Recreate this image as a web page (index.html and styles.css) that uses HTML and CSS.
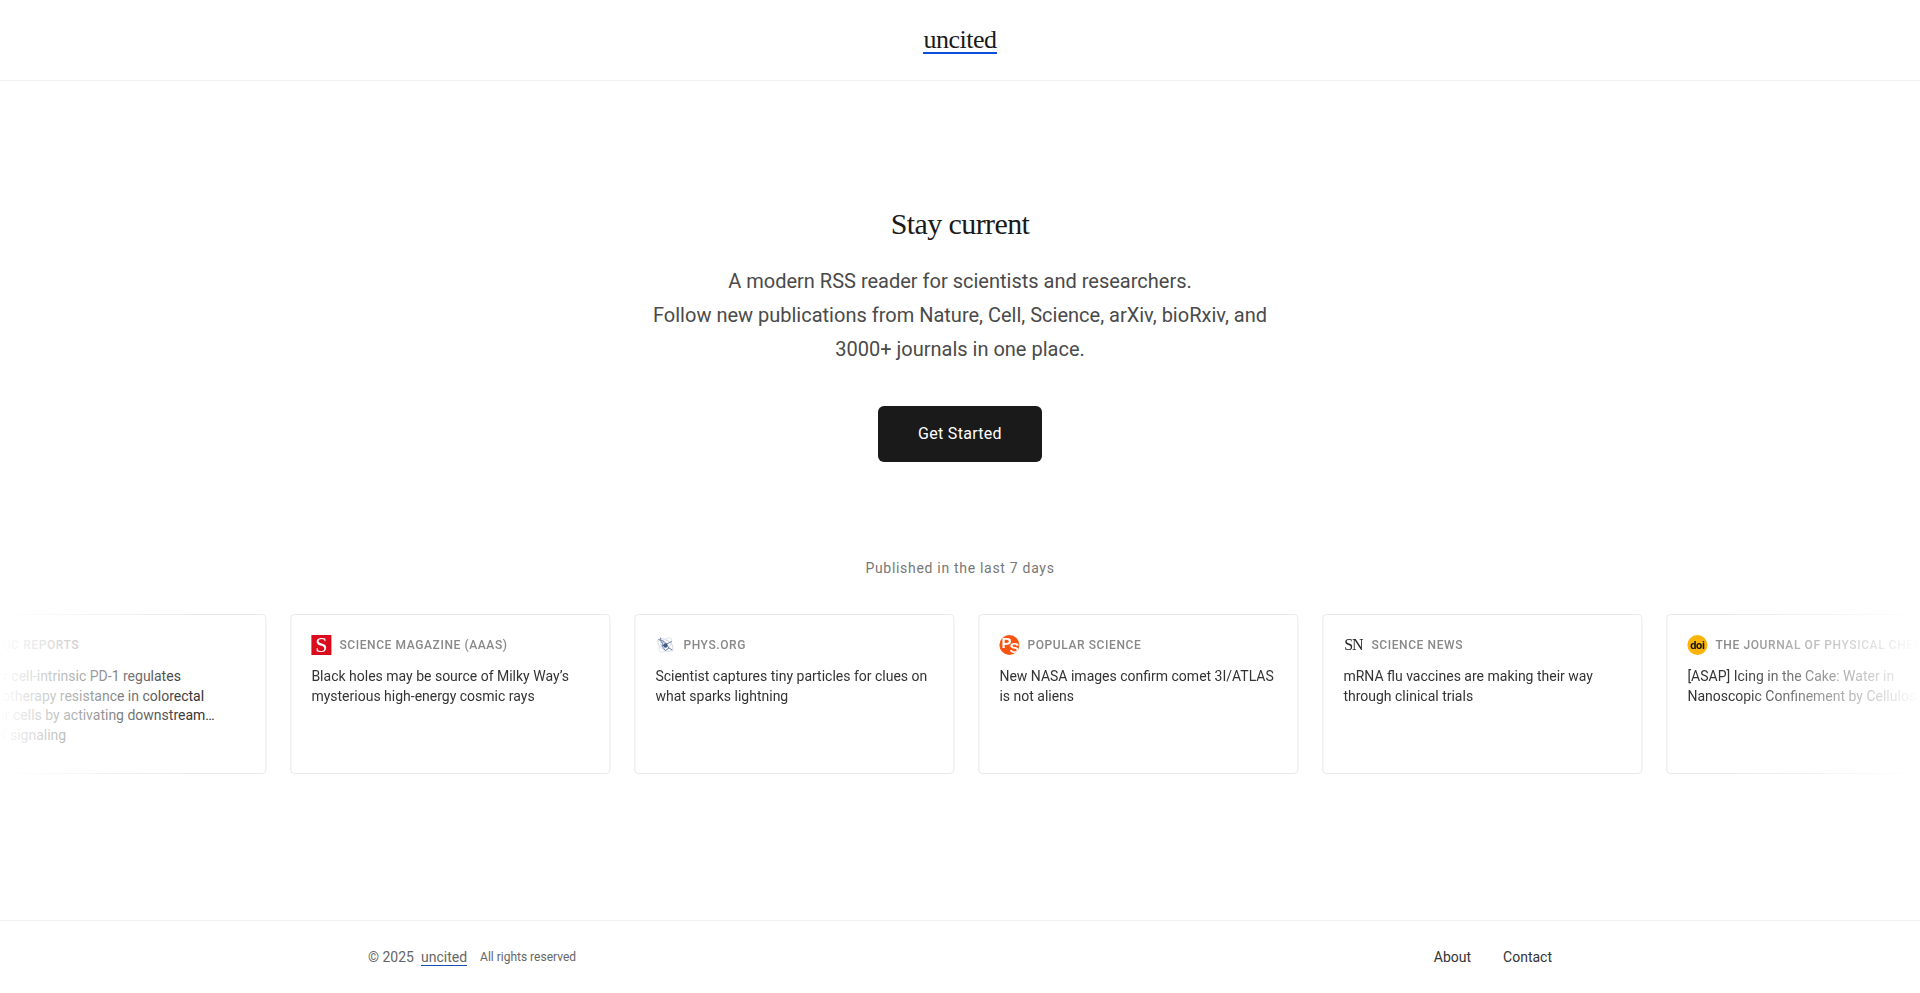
FILE: index.html
```html
<!DOCTYPE html>
<html lang="en">
<head>
    <meta charset="UTF-8">
    <meta name="viewport" content="width=device-width, initial-scale=1.0">
    <title>uncited</title>
    <link rel="stylesheet" href="styles.css">
</head>
<body>
    <div class="page">
        <header class="header">
            <a class="logo" href="#">uncited</a>
        </header>

        <main class="main">
            <section class="hero">
                <h1 class="hero-title">Stay current</h1>
                <p class="hero-text">A modern RSS reader for scientists and researchers.<br>Follow new publications from Nature, Cell, Science, arXiv, bioRxiv, and 3000+ journals in one place.</p>
                <a class="btn" href="#">Get Started</a>
            </section>

            <section class="recent">
                <div class="recent-label">Published in the last 7 days</div>
                <div class="marquee">
                    <div class="track">
                        <article class="card">
                            <div class="source">
                                <span class="icon"></span>
                                <span class="source-name">JUC Reports</span>
                            </div>
                            <p class="card-title">Tumor cell-intrinsic PD-1 regulates chemotherapy resistance in colorectal cancer cells by activating downstream… MAPK signaling</p>
                        </article>

                        <article class="card">
                            <div class="source">
                                <span class="icon icon-science">S</span>
                                <span class="source-name">Science Magazine (AAAS)</span>
                            </div>
                            <p class="card-title">Black holes may be source of Milky Way’s mysterious high-energy cosmic rays</p>
                        </article>

                        <article class="card">
                            <div class="source">
                                <span class="icon">
                                    <svg width="20" height="20" viewBox="0 0 20 20" fill="none">
                                        <ellipse cx="10" cy="10" rx="8.5" ry="5" stroke="#d3dae6" stroke-width="1" transform="rotate(35 10 10)"/>
                                        <ellipse cx="10" cy="10" rx="8.5" ry="4.5" stroke="#dfe4ec" stroke-width="1" transform="rotate(-50 10 10)"/>
                                        <path d="M3 4.5 L8 6 L11 9 L16.5 6.5 M8 6 L6.5 11 L11 9 L13.5 13 L17 15 M6.5 11 L10 15.5 L13.5 13 M5 2.5 L6 8" stroke="#6f84a8" stroke-width="1"/>
                                        <circle cx="10" cy="10.5" r="2.2" fill="#3f5a88"/>
                                    </svg>
                                </span>
                                <span class="source-name">Phys.org</span>
                            </div>
                            <p class="card-title">Scientist captures tiny particles for clues on what sparks lightning</p>
                        </article>

                        <article class="card">
                            <div class="source">
                                <span class="icon icon-popsci"><span class="popsci-p">P</span><span class="popsci-s">S</span></span>
                                <span class="source-name">Popular Science</span>
                            </div>
                            <p class="card-title">New NASA images confirm comet 3I/ATLAS is not aliens</p>
                        </article>

                        <article class="card">
                            <div class="source">
                                <span class="icon icon-sn">SN</span>
                                <span class="source-name">Science News</span>
                            </div>
                            <p class="card-title">mRNA flu vaccines are making their way through clinical trials</p>
                        </article>

                        <article class="card">
                            <div class="source">
                                <span class="icon icon-doi">doi</span>
                                <span class="source-name">The Journal of Physical Chemistry</span>
                            </div>
                            <p class="card-title">[ASAP] Icing in the Cake: Water in Nanoscopic Confinement by Cellulose</p>
                        </article>
                    </div>
                </div>
            </section>
        </main>

        <footer class="footer">
            <div class="footer-inner">
                <div class="footer-left">
                    <span>© 2025</span>
                    <a class="footer-logo" href="#">uncited</a>
                    <span class="footer-small">All rights reserved</span>
                </div>
                <nav class="footer-nav">
                    <a href="#">About</a>
                    <a href="#">Contact</a>
                </nav>
            </div>
        </footer>
    </div>
</body>
</html>
```

FILE: styles.css
```css
* {
    box-sizing: border-box;
}

body {
    margin: 0;
    background-color: #fff;
    color: #1a1a1a;
    font-family: Roboto, sans-serif;
}

a {
    color: inherit;
    text-decoration: none;
}

.page {
    display: flex;
    flex-direction: column;
    min-height: 100vh;
    overflow: hidden;
}

.header {
    display: flex;
    justify-content: center;
    align-items: center;
    height: 81px;
    padding-top: 2px;
    border-bottom: 1px solid #f0f0f0;
}

.logo {
    padding-bottom: 1px;
    font-family: "Liberation Serif", serif;
    font-size: 26px;
    line-height: 23px;
    letter-spacing: -0.5px;
    color: #1a1a1a;
    border-bottom: 2px solid #0b4fd8;
}

.main {
    flex: 1;
}

.hero {
    display: flex;
    flex-direction: column;
    align-items: center;
    padding-top: 125px;
    text-align: center;
}

.hero-title {
    margin: 0 0 22px;
    font-family: "Liberation Serif", serif;
    font-size: 30px;
    font-weight: 400;
    line-height: 36px;
    letter-spacing: -0.6px;
}

.hero-text {
    width: 640px;
    margin: 0 0 40px;
    font-size: 20px;
    line-height: 34px;
    color: #4a4a4a;
}

.btn {
    display: flex;
    justify-content: center;
    align-items: center;
    width: 164px;
    height: 56px;
    padding-bottom: 2px;
    background-color: #1a1a1a;
    color: #fff;
    font-size: 16px;
    letter-spacing: 0.3px;
    border-radius: 6px;
}

.recent {
    margin-top: 96px;
}

.recent-label {
    margin-bottom: 36px;
    text-align: center;
    font-size: 14px;
    line-height: 20px;
    letter-spacing: 0.7px;
    color: #777;
}

.marquee {
    overflow: hidden;
    -webkit-mask-image: linear-gradient(to right, transparent, #000 10%, #000 90%, transparent);
    mask-image: linear-gradient(to right, transparent, #000 10%, #000 90%, transparent);
}

/* scrolled sideways, so the cards sit on a fractional pixel */
.track {
    display: flex;
    gap: 24px;
    width: max-content;
    transform: translateX(-53.6px);
}

.card {
    width: 320px;
    height: 160px;
    padding: 20px;
    background-color: #fff;
    border: 1px solid #e8e8e8;
    border-radius: 4px;
}

.source {
    display: flex;
    align-items: center;
    gap: 8px;
    margin-bottom: 12px;
    white-space: nowrap;
}

.source-name {
    font-size: 12px;
    font-weight: 500;
    letter-spacing: 0.6px;
    text-transform: uppercase;
    color: #888;
}

.icon {
    display: flex;
    flex: none;
    justify-content: center;
    align-items: center;
    width: 20px;
    height: 20px;
    overflow: hidden;
}

.icon-science {
    background-color: #d90b1c;
    color: #fff;
    font-family: "Liberation Serif", serif;
    font-size: 22px;
}

.icon-popsci {
    background-color: #fb5412;
    color: #fff;
    border-radius: 50%;
    font-family: "Liberation Sans", sans-serif;
    font-size: 15px;
    font-weight: 700;
    letter-spacing: -2px;
}

.popsci-p {
    margin-top: -5px;
}

.popsci-s {
    margin-top: 5px;
}

.icon-sn {
    font-family: "Liberation Serif", serif;
    font-size: 16px;
    letter-spacing: -1px;
    color: #222;
}

.icon-doi {
    background-color: #fbb40a;
    border-radius: 50%;
    color: #111;
    font-size: 11px;
    font-weight: 700;
    letter-spacing: -0.3px;
}

.card-title {
    margin: 0;
    font-size: 14px;
    line-height: 1.4;
    color: #333;
}

.footer {
    height: 73px;
    border-top: 1px solid #f0f0f0;
}

.footer-inner {
    display: flex;
    justify-content: space-between;
    align-items: center;
    max-width: 1184px;
    height: 100%;
    margin: 0 auto;
    font-size: 14px;
}

.footer-left {
    display: flex;
    align-items: center;
    gap: 7px;
    color: #666;
}

.footer-logo {
    border-bottom: 1px solid #1a4fb8;
}

.footer-small {
    margin-left: 6px;
    font-size: 12px;
}

.footer-nav {
    display: flex;
    gap: 32px;
    color: #333;
}
```
